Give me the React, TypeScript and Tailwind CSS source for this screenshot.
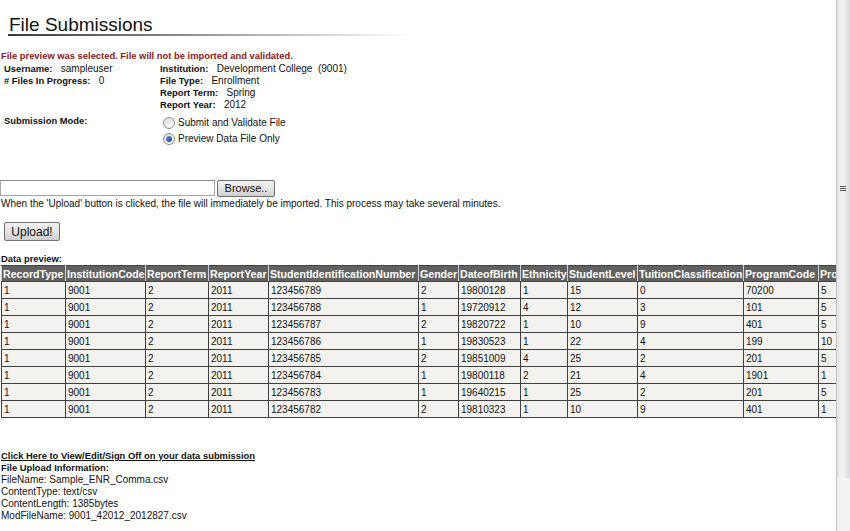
import React from "react";

const cols = [
  { h: "RecordType", w: "w-[64px]" },
  { h: "InstitutionCode", w: "w-[80px]" },
  { h: "ReportTerm", w: "w-[63px]" },
  { h: "ReportYear", w: "w-[60px]" },
  { h: "StudentIdentificationNumber", w: "w-[150px]" },
  { h: "Gender", w: "w-[40px]" },
  { h: "DateofBirth", w: "w-[62px]" },
  { h: "Ethnicity", w: "w-[47px]" },
  { h: "StudentLevel", w: "w-[70px]" },
  { h: "TuitionClassification", w: "w-[106px]" },
  { h: "ProgramCode", w: "w-[75px]" },
  { h: "ProgramLength", w: "w-[80px]" },
];

const rows = [
  ["1", "9001", "2", "2011", "123456789", "2", "19800128", "1", "15", "0", "70200", "5"],
  ["1", "9001", "2", "2011", "123456788", "1", "19720912", "4", "12", "3", "101", "5"],
  ["1", "9001", "2", "2011", "123456787", "2", "19820722", "1", "10", "9", "401", "5"],
  ["1", "9001", "2", "2011", "123456786", "1", "19830523", "1", "22", "4", "199", "10"],
  ["1", "9001", "2", "2011", "123456785", "2", "19851009", "4", "25", "2", "201", "5"],
  ["1", "9001", "2", "2011", "123456784", "1", "19800118", "2", "21", "4", "1901", "1"],
  ["1", "9001", "2", "2011", "123456783", "1", "19640215", "1", "25", "2", "201", "5"],
  ["1", "9001", "2", "2011", "123456782", "2", "19810323", "1", "10", "9", "401", "1"],
];

function Radio({ checked }: { checked?: boolean }) {
  return (
    <span className="flex h-[12px] w-[12px] items-center justify-center rounded-full border border-[#8e8f8f] bg-linear-to-br from-[#d9d9d9] to-[#ffffff]">
      {checked && (
        <span className="h-[6px] w-[6px] rounded-full bg-linear-to-br from-[#5fa3e0] to-[#163f7a]" />
      )}
    </span>
  );
}

function Field({ label, value }: { label: string; value: string }) {
  return (
    <div>
      <span className="text-[9.4px] font-bold">{label}</span>&nbsp;&nbsp; {value}
    </div>
  );
}

export default function App() {
  return (
    <div
      className="flex h-[531px] w-[850px] overflow-hidden bg-white text-[10px] text-[#111]"
      style={{ fontFamily: '"Liberation Sans", Arial, sans-serif' }}
    >
      <div className="min-w-0 flex-1 overflow-hidden">
        {/* Title */}
        <div className="pl-[8px] pt-[16px]">
          <div className="w-[402px]">
            <div className="pl-[1px] text-[19px] leading-[18px] text-[#111]">File Submissions</div>
            <div className="h-[2px] bg-linear-to-r from-[#3a3a3a] via-[#9a9a9a] to-white" />
          </div>
        </div>

        <div className="mt-[13px] pl-[1px] text-[9.4px] font-bold leading-[13px] text-[#8b2020]">
          File preview was selected. File will not be imported and validated.
        </div>

        {/* Info */}
        <div className="mt-[1px] grid grid-cols-[156px_1fr] pl-[4px] leading-[12px]">
          <div>
            <Field label="Username:" value="sampleuser" />
            <Field label="# Files In Progress:" value="0" />
          </div>
          <div>
            <Field label="Institution:" value={"Development College\u00a0 (9001)"} />
            <Field label="File Type:" value="Enrollment" />
            <Field label="Report Term:" value="Spring" />
            <Field label="Report Year:" value="2012" />
          </div>
          <div className="mt-[4px] text-[9.4px] font-bold">Submission Mode:</div>
          <div className="mt-[4px]">
            <div className="flex h-[16px] items-center gap-[3px] pl-[3px]">
              <Radio />
              <span>Submit and Validate File</span>
            </div>
            <div className="flex h-[16px] items-center gap-[3px] pl-[3px]">
              <Radio checked />
              <span>Preview Data File Only</span>
            </div>
          </div>
        </div>

        {/* File input */}
        <div className="mt-[33px] flex items-start gap-[2px]">
          <div className="h-[16px] w-[215px] border border-[#a5a5a5] border-t-[#8c8c8c] bg-white" />
          <div className="flex h-[17px] w-[58px] items-center justify-center rounded-[2px] border border-[#707070] bg-linear-to-b from-[#f2f2f2] via-[#e4e4e4] to-[#cfcfcf] text-[11px] text-[#111]">
            Browse..
          </div>
        </div>
        <div className="mt-[1px] pl-[1px] leading-[12px]">
          When the 'Upload' button is clicked, the file will immediately be imported. This process may take several minutes.
        </div>

        <div className="mt-[12px] pl-[4px]">
          <div className="flex h-[19px] w-[56px] items-center justify-center rounded-[2px] border border-[#707070] bg-linear-to-b from-[#f2f2f2] via-[#e4e4e4] to-[#cfcfcf] text-[12px] text-[#111]">
            Upload!
          </div>
        </div>

        <div className="mt-[12px] pl-[1px] text-[9.4px] font-bold leading-[12px]">Data preview:</div>

        {/* Table */}
        <div className="pl-[1px]">
          <table className="w-[897px] table-fixed border-collapse">
            <colgroup>
              {cols.map((c) => (
                <col key={c.h} className={c.w} />
              ))}
            </colgroup>
            <thead>
              <tr className="h-[16px]">
                {cols.map((c) => (
                  <th
                    key={c.h}
                    className="overflow-hidden whitespace-nowrap border border-x-[#cfcfcf] border-y-[#444] bg-[#616161] px-[1px] text-left text-[10.6px] font-bold leading-[14px] text-white"
                  >
                    {c.h}
                  </th>
                ))}
              </tr>
            </thead>
            <tbody>
              {rows.map((r, i) => (
                <tr key={i} className="h-[17px]">
                  {r.map((v, j) => (
                    <td
                      key={j}
                      className="overflow-hidden whitespace-nowrap border border-[#3f3f3f] bg-[#f3f2ee] px-[2px] text-left leading-[15px] text-[#111]"
                    >
                      {v}
                    </td>
                  ))}
                </tr>
              ))}
            </tbody>
          </table>
        </div>

        {/* Footer info */}
        <div className="mt-[32px] pl-[1px] leading-[12px]">
          <div className="text-[9.4px] font-bold underline">Click Here to View/Edit/Sign Off on your data submission</div>
          <div className="text-[9.4px] font-bold">File Upload Information:</div>
          <div>FileName: Sample_ENR_Comma.csv</div>
          <div>ContentType: text/csv</div>
          <div>ContentLength: 1385bytes</div>
          <div>ModFileName: 9001_42012_2012827.csv</div>
        </div>
      </div>

      {/* Scrollbar */}
      <div className="flex h-full w-[14px] flex-col border-l border-[#c2c2c2] bg-[#f0f0f0]">
        <div className="flex h-[478px] items-center justify-center border-r border-[#d6e0ea] bg-linear-to-r from-[#e4e4e4] via-[#f4f4f4] to-[#dcdcdc]">
          <div className="-mt-[102px] flex flex-col gap-[1px]">
            <div className="h-[1px] w-[6px] bg-[#555]" />
            <div className="h-[1px] w-[6px] bg-[#555]" />
            <div className="h-[1px] w-[6px] bg-[#555]" />
          </div>
        </div>
        <div className="flex-1 bg-[#f2f2f2]" />
      </div>
    </div>
  );
}
